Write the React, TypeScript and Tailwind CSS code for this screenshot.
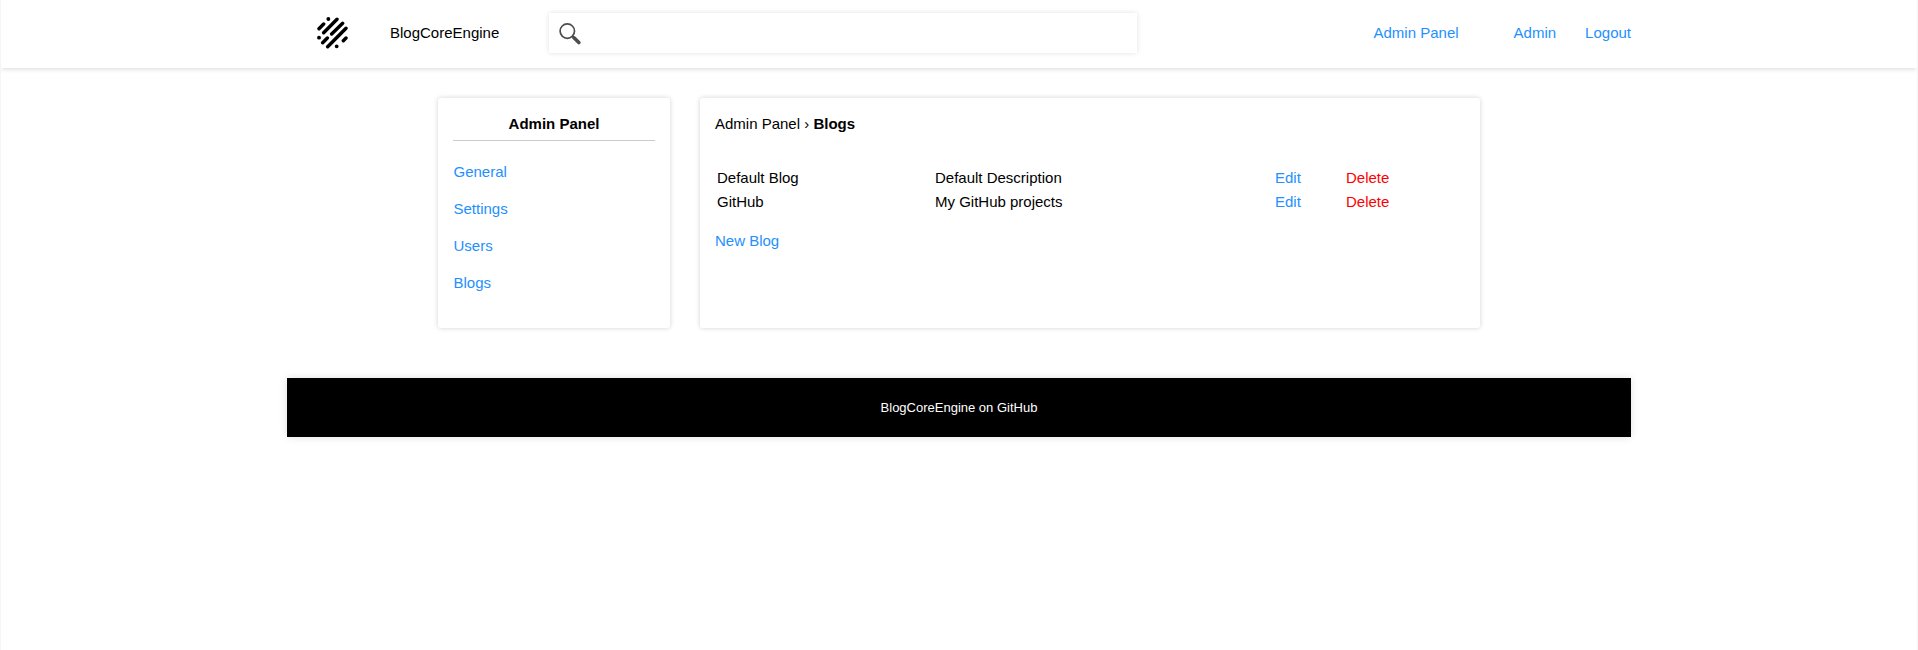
const sections = ["General", "Settings", "Users", "Blogs"];

const blogs = [
  { name: "Default Blog", description: "Default Description" },
  { name: "GitHub", description: "My GitHub projects" },
];

function Logo() {
  return (
    <svg viewBox="0 0 96 96" className="mt-[17px] ml-[30px] h-8 w-8 shrink-0" stroke="#000" strokeWidth="10.3" strokeLinecap="round">
      <path strokeWidth="11.5" d="M34 6h.1M6 62h.1M59 88h.1" />
      <path d="M20 21 6 35M60 7 20 47M77 19 44 51M87 34 32 89M31 63 17 77M87 63l-8 8" />
    </svg>
  );
}

function SearchIcon() {
  return (
    <svg viewBox="0 0 24 24" className="h-6 w-6" fill="none" stroke="#4d4d4d">
      <circle cx="8.3" cy="10.1" r="7.2" strokeWidth="1.7" />
      <path d="m13.2 15 1.8 1.8" strokeWidth="2.2" />
      <path d="m15 16.8 4.8 4.7" strokeWidth="3.6" strokeLinecap="round" />
    </svg>
  );
}

export default function App() {
  return (
    <div className="flex h-[650px] flex-col overflow-hidden border-x border-[#f5f5f5] bg-white font-['Liberation_Sans',Arial,sans-serif] text-[15px] leading-[17px] text-black">
      <header className="h-[68px] shrink-0 shadow-[0_0_6px_rgba(0,0,0,0.2)]">
        <div className="mx-auto flex h-full w-[1344px] items-start">
          <Logo />
          <span className="mt-6 ml-[41px] w-[159px]">BlogCoreEngine</span>
          <div className="mt-[13px] flex h-10 w-[588px] items-center bg-white pl-[10px] shadow-[0_0_5px_rgba(0,0,0,0.12)]">
            <SearchIcon />
          </div>
          <nav className="mt-6 ml-auto flex text-[#1e90ff]">
            <a className="mr-[55px]">Admin Panel</a>
            <a className="mr-[29px]">Admin</a>
            <a>Logout</a>
          </nav>
        </div>
      </header>

      <main className="mx-auto mt-[30px] flex h-[230px] w-[1042px] shrink-0 gap-[30px]">
        <aside className="w-[232px] rounded-[3px] bg-white px-[15px] pt-[17px] shadow-[0_0_5px_rgba(0,0,0,0.18)]">
          <h2 className="h-[26px] border-b border-[#cccccc] text-center font-bold">Admin Panel</h2>
          <ul className="mt-[22px] flex flex-col gap-5 pl-[0.5px] text-[#1e90ff]">
            {sections.map((s) => (
              <li key={s}>{s}</li>
            ))}
          </ul>
        </aside>
        <section className="w-[780px] rounded-[3px] bg-white px-[15px] pt-[17px] shadow-[0_0_5px_rgba(0,0,0,0.18)]">
          <div>
            Admin Panel › <b>Blogs</b>
          </div>
          <div className="mt-[37px] flex flex-col gap-[7px] pl-[2px]">
            {blogs.map((b) => (
              <div key={b.name} className="grid grid-cols-[218px_340px_71px_auto]">
                <span>{b.name}</span>
                <span>{b.description}</span>
                <a className="text-[#1e90ff]">Edit</a>
                <a className="text-[#ff0000]">Delete</a>
              </div>
            ))}
          </div>
          <a className="mt-[22px] block text-[#1e90ff]">New Blog</a>
        </section>
      </main>

      <footer className="mx-auto mt-[50px] flex h-[59px] w-[1344px] shrink-0 items-center justify-center bg-black text-[13px] text-white shadow-[0_0_8px_rgba(0,0,0,0.12)]">
        BlogCoreEngine on GitHub
      </footer>
    </div>
  );
}
